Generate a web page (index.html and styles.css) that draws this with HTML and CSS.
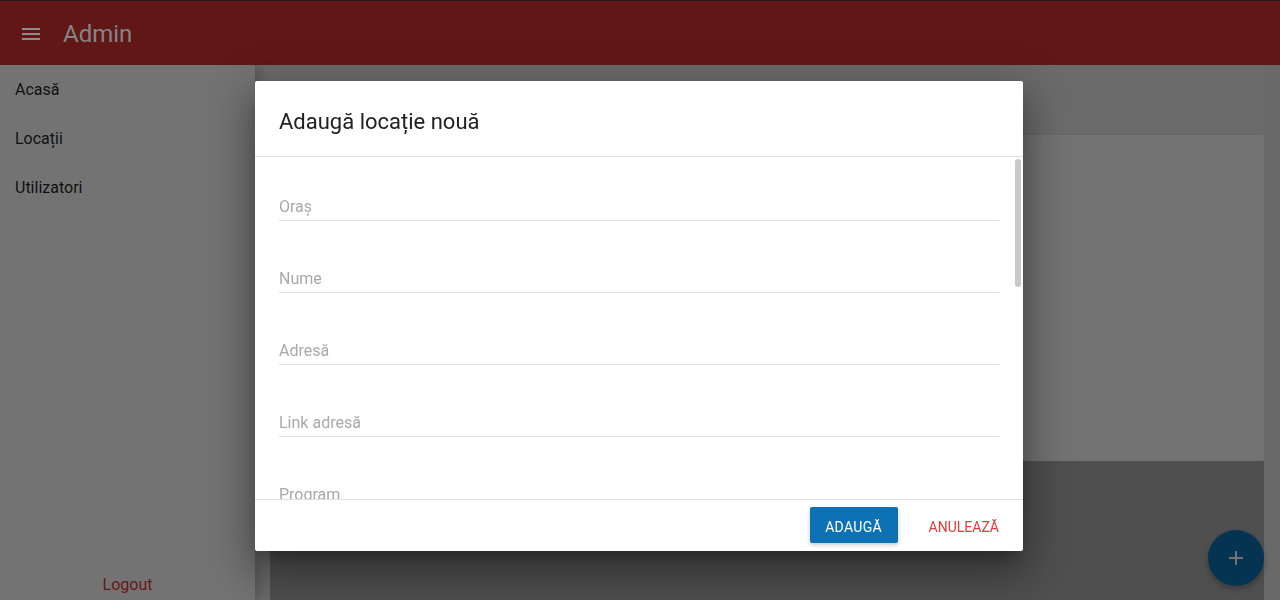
FILE: index.html
```html
<!DOCTYPE html>
<html lang="ro">
<head>
<meta charset="utf-8">
<title>Admin</title>
<link rel="stylesheet" href="styles.css">
</head>
<body>
<div class="app">
  <header class="topbar">
    <svg class="menu-icon" width="24" height="24" viewBox="0 0 24 24"><path d="M3 18h18v-2H3v2zm0-5h18v-2H3v2zm0-7v2h18V6H3z" fill="currentColor"/></svg>
    <span class="brand">Admin</span>
  </header>
  <div class="layout">
    <aside class="sidebar">
      <nav class="nav">
        <a class="nav-item">Acasă</a>
        <a class="nav-item">Locații</a>
        <a class="nav-item">Utilizatori</a>
      </nav>
      <a class="logout">Logout</a>
    </aside>
    <main class="main">
      <div class="content">
        <section class="card"></section>
        <section class="table-area"></section>
      </div>
      <div class="page-scroll"></div>
    </main>
  </div>
  <button class="fab"><svg width="24" height="24" viewBox="0 0 24 24"><path d="M19 13h-6v6h-2v-6H5v-2h6V5h2v6h6v2z" fill="currentColor"/></svg></button>
</div>
<div class="overlay"></div>
<div class="dialog">
  <div class="dialog-title">Adaugă locație nouă</div>
  <div class="dialog-content">
    <div class="field"><span class="label">Oraș</span></div>
    <div class="field"><span class="label">Nume</span></div>
    <div class="field"><span class="label">Adresă</span></div>
    <div class="field"><span class="label">Link adresă</span></div>
    <div class="field"><span class="label">Program</span></div>
    <div class="scroll-thumb"></div>
  </div>
  <div class="dialog-actions">
    <button class="btn-primary">ADAUGĂ</button>
    <button class="btn-flat">ANULEAZĂ</button>
  </div>
</div>
</body>
</html>
```
FILE: styles.css
```css
* { box-sizing: border-box; }
html, body { margin: 0; padding: 0; height: 100%; overflow: hidden; }
body { font-family: Roboto, "Liberation Sans", sans-serif; background: #eeeeee; }

.app { height: 600px; display: flex; flex-direction: column; }

.topbar {
  position: relative;
  z-index: 20;
  height: 65px;
  flex: none;
  border-top: 1px solid #1c1c1c;
  background: #611716;
  display: flex;
  align-items: center;
  padding: 1px 0 0 19px;
  color: #8a8a8a;
}
.menu-icon { display: block; color: #8c8c8c; }
.brand { margin-left: 20px; font-size: 24px; line-height: 28px; color: #858585; }

.layout { flex: 1; display: flex; min-height: 0; }

.sidebar {
  width: 255px;
  flex: none;
  background: #ffffff;
  display: flex;
  flex-direction: column;
  justify-content: space-between;
  position: relative;
  z-index: 2;
  box-shadow: 2px 0 14px rgba(0,0,0,0.28);
}
.nav { display: flex; flex-direction: column; }
.nav-item {
  padding: 15px 15px 14px;
  font-size: 16px;
  line-height: 20px;
  color: rgba(0,0,0,0.87);
}
.logout {
  text-align: center;
  font-size: 16px;
  line-height: 20px;
  padding-bottom: 5px;
  color: #e53935;
}

.main { flex: 1; display: flex; min-width: 0; background: #eeeeee; }
.content { flex: 1; padding: 70px 0 0 15px; display: flex; flex-direction: column; }
.card {
  height: 326px;
  background: #ffffff;
  border-radius: 2px;
  box-shadow: 0 1px 3px rgba(0,0,0,0.2);
}
.table-area { flex: 1; background: #b0b0b0; }
.page-scroll { width: 16px; flex: none; background: #e8e8e8; }

.fab {
  position: fixed;
  right: 16px;
  bottom: 14px;
  width: 56px;
  height: 56px;
  border: none;
  border-radius: 50%;
  background: #0d72b5;
  color: #ffffff;
  display: flex;
  align-items: center;
  justify-content: center;
  padding: 0;
  box-shadow: 0 3px 6px rgba(0,0,0,0.3);
}
.fab svg { display: block; }

.overlay { position: fixed; inset: 0; background: rgba(0,0,0,0.55); z-index: 10; }

.dialog {
  position: fixed;
  left: 255px;
  top: 81px;
  width: 768px;
  height: 470px;
  z-index: 30;
  background: #ffffff;
  border-radius: 2px;
  display: flex;
  flex-direction: column;
  box-shadow: 0 11px 15px -7px rgba(0,0,0,0.3), 0 24px 38px 3px rgba(0,0,0,0.22), 0 9px 46px 8px rgba(0,0,0,0.2);
}
.dialog-title {
  padding: 28px 24px 21px;
  font-size: 22px;
  line-height: 26px;
  color: #212121;
  border-bottom: 1px solid #e0e0e0;
  flex: none;
}
.dialog-content {
  flex: 1;
  min-height: 0;
  overflow: hidden;
  position: relative;
  padding: 24px 24px 0;
  border-bottom: 1px solid #e0e0e0;
}
.field {
  padding: 16px 0 3px;
  margin-bottom: 32px;
  border-bottom: 1px solid #e0e0e0;
}
.label { display: block; font-size: 16px; line-height: 20px; color: #a9a9a9; }
.scroll-thumb {
  position: absolute;
  right: 2px;
  top: 2px;
  width: 6px;
  height: 128px;
  border-radius: 3px;
  background: #c8c8c8;
}
.dialog-actions {
  flex: none;
  height: 51px;
  display: flex;
  align-items: flex-start;
  justify-content: flex-end;
  padding: 7px 24px 0;
}
.btn-primary {
  width: 88px;
  height: 36px;
  border: none;
  border-radius: 2px;
  background: #0d72b5;
  color: #ffffff;
  font-family: Roboto, "Liberation Sans", sans-serif;
  font-size: 14px;
  font-weight: 400;
  letter-spacing: 0.3px;
  padding: 3px 0 0;
  box-shadow: 0 2px 4px rgba(0,0,0,0.22);
}
.btn-flat {
  height: 36px;
  margin-left: 31px;
  border: none;
  background: transparent;
  color: #e53935;
  font-family: Roboto, "Liberation Sans", sans-serif;
  font-size: 14px;
  font-weight: 400;
  padding: 3px 0 0;
}
```
